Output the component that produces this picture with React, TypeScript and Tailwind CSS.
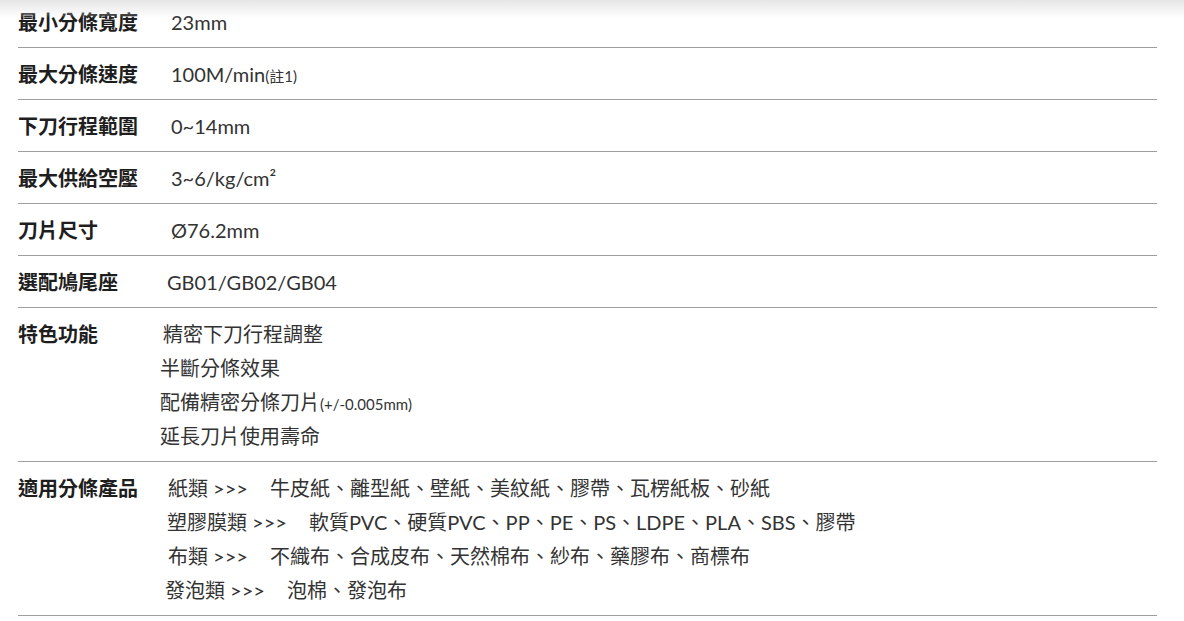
import React from "react";

const font = { fontFamily: 'Lato, "Noto Sans CJK TC", "Noto Sans CJK SC", sans-serif' };

type Row = { label: string; content: React.ReactNode };

function Single({ children, offset }: { children: React.ReactNode; offset?: string }) {
  return <div className={offset ?? ""}>{children}</div>;
}

export default function App() {
  const rows: Row[] = [
    { label: "最小分條寬度", content: <Single>23mm</Single> },
    {
      label: "最大分條速度",
      content: (
        <Single>
          100M/min<span className="text-[15px] leading-none">(註1)</span>
        </Single>
      ),
    },
    { label: "下刀行程範圍", content: <Single>0~14mm</Single> },
    { label: "最大供給空壓", content: <Single>3~6/kg/cm²</Single> },
    { label: "刀片尺寸", content: <Single>Ø76.2mm</Single> },
    { label: "選配鳩尾座", content: <Single offset="-ml-[4px]">GB01/GB02/GB04</Single> },
    {
      label: "特色功能",
      content: (
        <div className="flex flex-col">
          <div className="-ml-[8px]">精密下刀行程調整</div>
          <div className="-ml-[11px]">半斷分條效果</div>
          <div className="-ml-[11px]">
            配備精密分條刀片<span className="text-[15px] leading-none">(+/-0.005mm)</span>
          </div>
          <div className="-ml-[11px]">延長刀片使用壽命</div>
        </div>
      ),
    },
    {
      label: "適用分條產品",
      content: (
        <div className="flex flex-col">
          <div className="-ml-[3px]">
            紙類 &gt;&gt;&gt;<span className="ml-[22px]">牛皮紙、離型紙、壁紙、美紋紙、膠帶、瓦楞紙板、砂紙</span>
          </div>
          <div className="-ml-[4px]">
            塑膠膜類 &gt;&gt;&gt;<span className="ml-[22px]">軟質PVC、硬質PVC、PP、PE、PS、LDPE、PLA、SBS、膠帶</span>
          </div>
          <div className="-ml-[3px]">
            布類 &gt;&gt;&gt;<span className="ml-[22px]">不織布、合成皮布、天然棉布、紗布、藥膠布、商標布</span>
          </div>
          <div className="-ml-[6px]">
            發泡類 &gt;&gt;&gt;<span className="ml-[22px]">泡棉、發泡布</span>
          </div>
        </div>
      ),
    },
  ];

  return (
    <div className="relative w-[1184px] h-[621px] overflow-hidden bg-white" style={font}>
      <div className="pointer-events-none absolute left-0 top-0 h-[18px] w-full bg-gradient-to-b from-[#e6e6e6] to-white/0" />
      <div className="ml-[18px] -mt-[4px] w-[1139px]">
        {rows.map((r) => (
          <div
            key={r.label}
            className="flex border-b border-[#9e9e9e] pt-[9px] pb-[8px] leading-[34px] text-[20px]"
          >
            <div className="w-[153px] shrink-0 font-bold text-[#1e1e1e]">{r.label}</div>
            <div className="text-[#333333]">{r.content}</div>
          </div>
        ))}
      </div>
    </div>
  );
}
